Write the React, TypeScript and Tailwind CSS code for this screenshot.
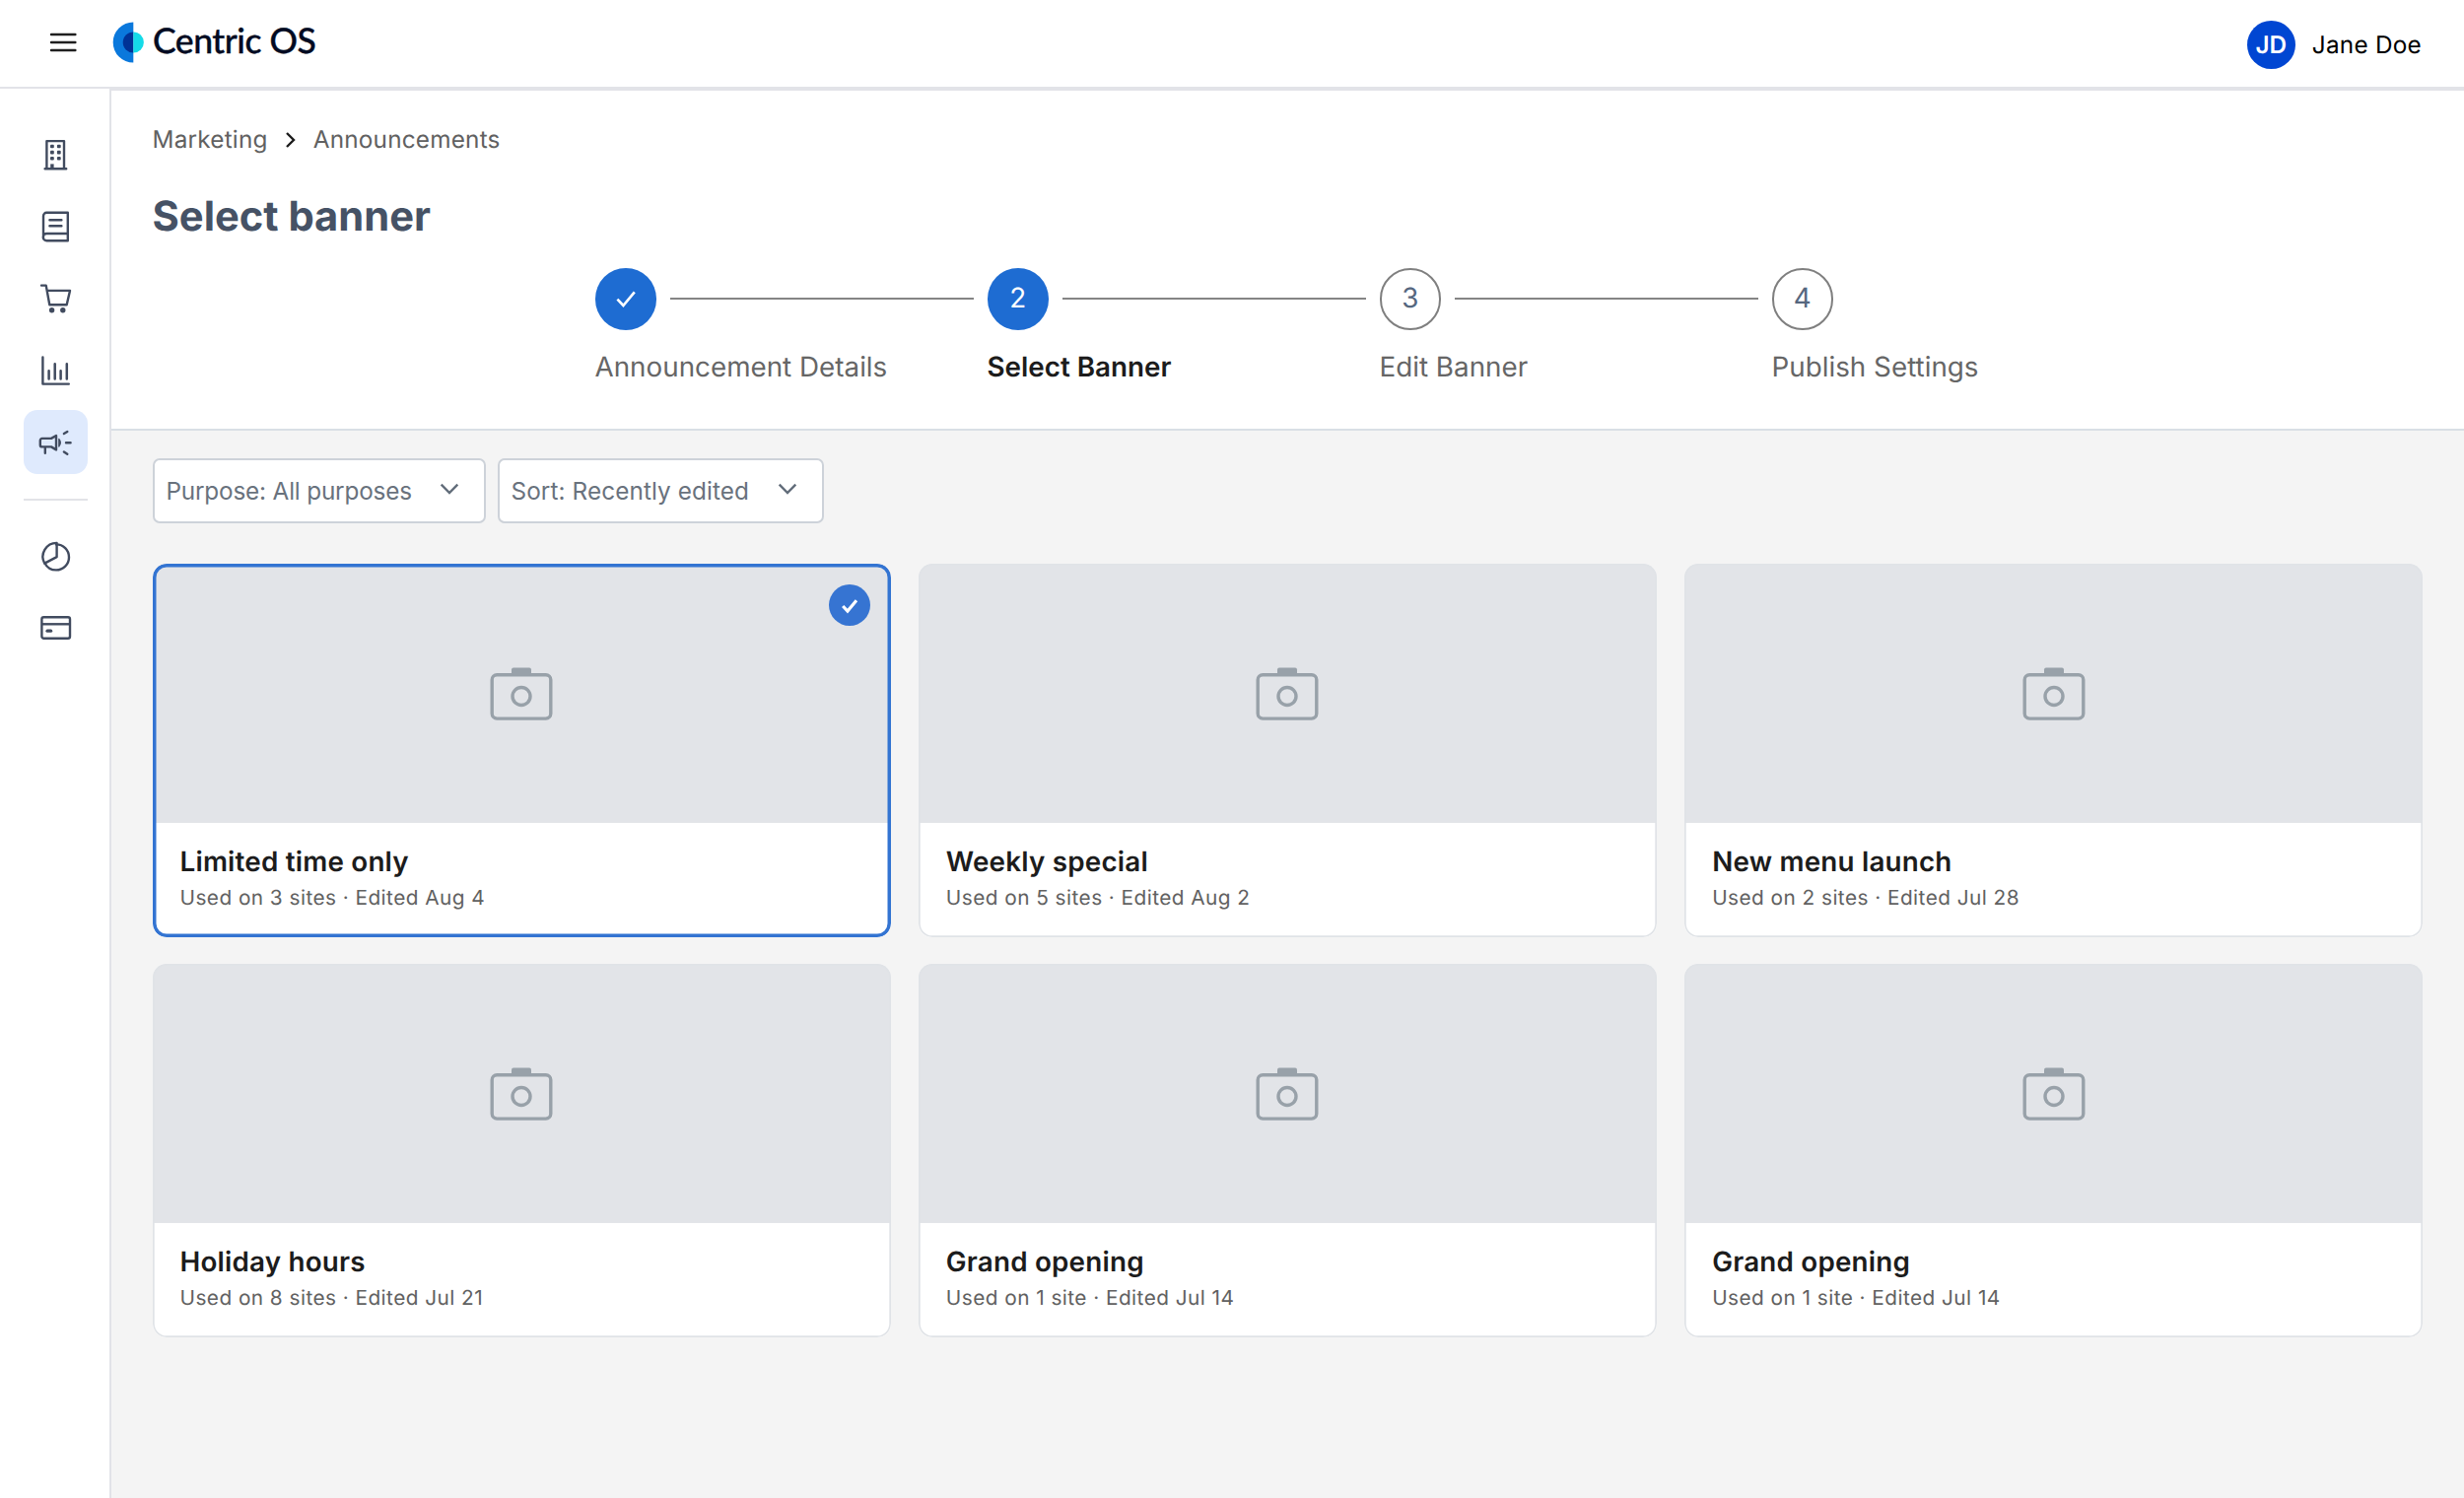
import { ReactNode } from 'react';
import clsx from 'clsx';

interface Step {
  label: string;
  state: 'done' | 'current' | 'upcoming';
}

interface Banner {
  title: string;
  meta: string;
  selected?: boolean;
}

const steps: Step[] = [
  { label: 'Announcement Details', state: 'done' },
  { label: 'Select Banner', state: 'current' },
  { label: 'Edit Banner', state: 'upcoming' },
  { label: 'Publish Settings', state: 'upcoming' },
];

const banners: Banner[] = [
  { title: 'Limited time only', meta: 'Used on 3 sites · Edited Aug 4', selected: true },
  { title: 'Weekly special', meta: 'Used on 5 sites · Edited Aug 2' },
  { title: 'New menu launch', meta: 'Used on 2 sites · Edited Jul 28' },
  { title: 'Holiday hours', meta: 'Used on 8 sites · Edited Jul 21' },
  { title: 'Grand opening', meta: 'Used on 1 site · Edited Jul 14' },
  { title: 'Grand opening', meta: 'Used on 1 site · Edited Jul 14' },
];

function NavIcon({ children }: { children: ReactNode }) {
  return (
    <svg
      viewBox="0 0 36 36"
      className="size-9"
      fill="none"
      stroke="#414b5f"
      strokeWidth={2.4}
      strokeLinecap="round"
      strokeLinejoin="round"
    >
      {children}
    </svg>
  );
}

function BuildingIcon() {
  return (
    <NavIcon>
      <path d="M7.6 32.2h21.6M9.4 32V4.1h17.6V32" />
      <path d="M14.9 32v-4.6" strokeWidth={3.4} strokeLinecap="butt" />
      <g fill="#414b5f" stroke="none">
        <rect x="13" y="7.7" width="3.8" height="3.6" rx="1" />
        <rect x="19.9" y="7.7" width="3.8" height="3.6" rx="1" />
        <rect x="13" y="13.8" width="3.8" height="3.6" rx="1" />
        <rect x="19.9" y="13.8" width="3.8" height="3.6" rx="1" />
        <rect x="13" y="19.9" width="3.8" height="3.6" rx="1" />
        <rect x="19.9" y="19.9" width="3.8" height="3.6" rx="1" />
      </g>
    </NavIcon>
  );
}

function BookIcon() {
  return (
    <NavIcon>
      <path d="M30.8 25H9.4a3.6 3.6 0 0 0 0 7.3h21.4V3.8H9.2A3.2 3.2 0 0 0 6 7v21.6" />
      <path d="M12.4 11.2h12M12.4 17.2h12" />
    </NavIcon>
  );
}

function CartIcon() {
  return (
    <NavIcon>
      <path d="M4 4.6h4.7l3.6 19.6h17.4L33 9.9H9.7" />
      <g fill="#414b5f" stroke="none">
        <circle cx="14.6" cy="29.7" r="2.7" />
        <circle cx="25.8" cy="29.7" r="2.7" />
      </g>
    </NavIcon>
  );
}

function ChartIcon() {
  return (
    <NavIcon>
      <path d="M5.4 4.4v27.2h26.4" />
      <path d="M11.6 26.4v-8.2M17.7 26.4V11.2M23.6 26.4v-8.2M29.8 26.4V11.2" strokeWidth={2.5} />
    </NavIcon>
  );
}

function MegaphoneIcon() {
  return (
    <NavIcon>
      <path d="M4.8 13.9h9.2l5-2.9v14.4l-5-3H4.8a2 2 0 0 1-2-2v-4.5a2 2 0 0 1 2-2ZM7.8 22.8v6" />
      <path d="M21.8 14.4c2 2.4 2 5.200 0 7.600Z" fill="#414b5f" strokeWidth={1.2} />
      <path d="M26.9 9.1 30.3 7M29 18.2h4.6M26.9 27.5l3.4 2.3" />
    </NavIcon>
  );
}

function PieIcon() {
  return (
    <NavIcon>
      <circle cx="19" cy="19.4" r="13" strokeDasharray="54.6 27.1" transform="rotate(-90 19 19.4)" />
      <path d="M19.6 19.1V4.9A14 14 0 0 0 7.2 25.6Z" />
    </NavIcon>
  );
}

function CardIcon() {
  return (
    <NavIcon>
      <rect x="4.4" y="7.3" width="28.6" height="21.4" rx="2" />
      <path d="M4.4 14.3H33" strokeLinecap="butt" />
      <path d="M10 21.2h3.6" strokeWidth={3.2} />
    </NavIcon>
  );
}

function Check({ className, strokeWidth }: { className: string; strokeWidth: number }) {
  return (
    <svg viewBox="0 0 24 24" className={className} fill="none" stroke="#fff" strokeWidth={strokeWidth}>
      <path d="M3.4 12.6 9.4 19 20.8 5.4" />
    </svg>
  );
}

function Logo() {
  return (
    <div className="flex items-center">
      <svg viewBox="0 0 32 42" className="h-[42px] w-8 shrink-0">
        <path d="M21.3.4a20.6 20.6 0 0 0 0 41.2Z" fill="#0a78dc" />
        <path d="M21.3 10.4a10.6 10.6 0 0 0 0 21.2Z" fill="#003296" />
        <path d="M21.3 10.4a10.6 10.6 0 0 1 0 21.2Z" fill="#14dbe8" />
      </svg>
      <span className="mb-[3px] ml-[9px] font-['Lato'] text-[35.5px] leading-10 font-medium tracking-[-0.45px] text-[#020b22] [-webkit-text-stroke:0.4px]">
        Centric OS
      </span>
    </div>
  );
}

function Header() {
  return (
    <header className="flex h-[90px] items-start justify-between border-b-2 border-[#e2e3e8] bg-white pr-[43px] pl-[50px]">
      <div className="flex items-center pt-[21px]">
        <svg viewBox="0 0 28 20" className="mr-9 h-5 w-7" stroke="#1f1f1f" strokeWidth={2.4} strokeLinecap="round">
          <path d="M2 2h24.4M2 10h24.4M2 18h24.4" />
        </svg>
        <Logo />
      </div>
      <div className="flex items-center pt-[21px]">
        <div className="flex size-[49px] items-center justify-center rounded-full bg-[#0046d2] text-[24.3px] font-semibold text-white">
          JD
        </div>
        <span className="ml-[17px] text-[24.3px] tracking-[0.25px] text-black">Jane Doe</span>
      </div>
    </header>
  );
}

function Sidebar() {
  const cell = 'flex size-[65px] items-center justify-center rounded-[14px]';
  return (
    <nav className="flex w-[113px] shrink-0 flex-col items-center border-r-2 border-[#e2e3e8] bg-white pt-[34px] pl-px">
      <div className="flex flex-col gap-2">
        <div className={cell}><BuildingIcon /></div>
        <div className={cell}><BookIcon /></div>
        <div className={cell}><CartIcon /></div>
        <div className={cell}><ChartIcon /></div>
        <div className={clsx(cell, 'bg-[#dfeafd]')}><MegaphoneIcon /></div>
      </div>
      <hr className="mt-[25px] mb-[23px] w-[65px] border-t-2 border-[#e2e3e8]" />
      <div className="flex flex-col gap-2">
        <div className={cell}><PieIcon /></div>
        <div className={cell}><CardIcon /></div>
      </div>
    </nav>
  );
}

function Stepper() {
  return (
    <ol className="ml-[449px] flex">
      {steps.map((step, i) => (
        <li key={step.label} className="w-[398px]">
          <div className="flex items-center">
            <div
              className={clsx(
                'flex size-[62.5px] shrink-0 items-center justify-center rounded-full text-[27.8px]',
                step.state === 'upcoming'
                  ? 'border-2 border-[#7f7f7f] text-[#56677f]'
                  : 'bg-[#1e6cd2] text-white',
              )}
            >
              {step.state === 'done' ? <Check className="size-6" strokeWidth={2.6} /> : i + 1}
            </div>
            {i < steps.length - 1 && <div className="mx-[14px] h-0.5 flex-1 bg-[#858585]" />}
          </div>
          <p
            className={clsx(
              'mt-4 text-[27.8px] leading-[42px] whitespace-nowrap',
              step.state === 'current' ? 'font-semibold text-[#1c1c1c]' : 'text-[#666]',
            )}
          >
            {step.label}
          </p>
        </li>
      ))}
    </ol>
  );
}

function FilterSelect({ label, className }: { label: string; className: string }) {
  return (
    <button
      className={clsx(
        'flex h-[66px] items-center justify-between rounded-[7px] border-2 border-[#cdd2d9] bg-white pr-[25px] pl-3 text-[24.3px] text-[#69727d]',
        className,
      )}
    >
      {label}
      <svg viewBox="0 0 20 12" className="mb-1 h-3 w-5" fill="none" stroke="#626d7a" strokeWidth={2.4}>
        <path d="M1.7 1.7 10 10l8.3-8.3" />
      </svg>
    </button>
  );
}

function BannerCard({ banner }: { banner: Banner }) {
  return (
    <article
      className={clsx(
        'relative h-[378.5px] overflow-hidden rounded-[14px] bg-white',
        'after:pointer-events-none after:absolute after:inset-0 after:rounded-[14px]',
        banner.selected
          ? 'after:shadow-[inset_0_0_0_3.5px_#3374d2]'
          : 'after:shadow-[inset_0_0_0_1.7px_#e0e3e7]',
      )}
    >
      <div className="flex h-[263px] items-center justify-center bg-[#e2e4e8]">
        <svg viewBox="0 0 64 54" className="h-[54px] w-16" fill="none" stroke="#98a1a9" strokeWidth={3.4}>
          <rect x="2.2" y="7.7" width="59.6" height="44.4" rx="5" />
          <rect x="22" y="0.5" width="20" height="7" rx="2" fill="#98a1a9" stroke="none" />
          <circle cx="32" cy="29.5" r="9" />
        </svg>
      </div>
      <div className="px-7 pt-5">
        <h2 className="text-[27.8px] leading-[38px] font-semibold tracking-[0.2px] text-[#1c1c1c]">{banner.title}</h2>
        <p className="mt-1 text-[20.8px] leading-[30px] tracking-[0.45px] text-[#616161]">{banner.meta}</p>
      </div>
      {banner.selected && (
        <div className="absolute top-[21px] right-[21px] flex size-[42px] items-center justify-center rounded-full bg-[#3674d2]">
          <Check className="h-[19px] w-5" strokeWidth={4} />
        </div>
      )}
    </article>
  );
}

export default function App() {
  return (
    <div className="flex h-[1520px] w-[2500px] flex-col overflow-hidden bg-white font-['Inter',sans-serif] [text-rendering:geometricPrecision]">
      <Header />
      <div className="flex flex-1">
        <Sidebar />
        <main className="flex flex-1 flex-col bg-[#f4f4f4]">
          <section className="h-[347px] border-t-2 border-b-2 border-t-[#e2e3e8] border-b-[#d9dfe5] bg-white px-[41.5px] pt-8">
            <div className="flex h-[35px] items-center text-[24.3px] tracking-[0.22px] text-[#616161]">
              <span>Marketing</span>
              <svg viewBox="0 0 12 18" className="mx-[17px] h-[18px] w-3" fill="none" stroke="#1c1c1c" strokeWidth={2.4}>
                <path d="m2 2 7 7-7 7" />
              </svg>
              <span>Announcements</span>
            </div>
            <h1 className="mt-[35px] mb-[26px] text-[41.7px] leading-[52px] font-bold text-[#465265]">Select banner</h1>
            <Stepper />
          </section>
          <div className="px-[41.5px] pt-7">
            <div className="flex gap-3">
              <FilterSelect label="Purpose: All purposes" className="w-[338px] tracking-[-0.18px]" />
              <FilterSelect label="Sort: Recently edited" className="w-[331px] tracking-[0.1px]" />
            </div>
            <div className="mt-[41px] grid grid-cols-3 gap-x-7 gap-y-[27.5px]">
              {banners.map((banner, i) => (
                <BannerCard key={i} banner={banner} />
              ))}
            </div>
          </div>
        </main>
      </div>
    </div>
  );
}
